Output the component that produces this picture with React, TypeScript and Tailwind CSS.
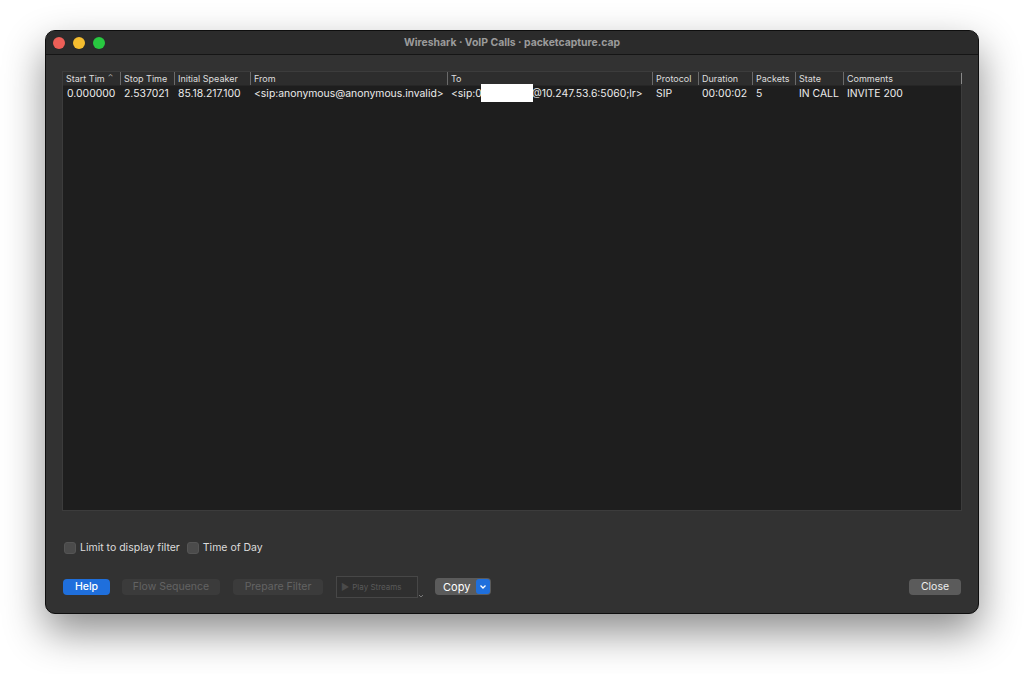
import React from "react";

const cols = [
  { name: "Start Tim", w: 57, val: "0.000000", sort: true },
  { name: "Stop Time", w: 54, val: "2.537021" },
  { name: "Initial Speaker", w: 76, val: "85.18.217.100" },
  { name: "From", w: 197, val: "<sip:anonymous@anonymous.invalid>" },
  { name: "To", w: 205, val: "TO" },
  { name: "Protocol", w: 46, val: "SIP" },
  { name: "Duration", w: 54, val: "00:00:02" },
  { name: "Packets", w: 43, val: "5" },
  { name: "State", w: 48, val: "IN CALL" },
  { name: "Comments", w: 118, val: "INVITE 200" },
];

export default function App() {
  return (
    <div
      className="w-[1024px] h-[674px] bg-white pt-[30px] pl-[45px] overflow-hidden"
      style={{ fontFamily: "Inter, 'Noto Sans', sans-serif" }}
    >
      <div className="w-[934px] h-[584px] rounded-[10px] bg-[#323232] border border-[#0e0e0e] shadow-[0_18px_40px_rgba(0,0,0,0.45)] flex flex-col overflow-hidden">
        {/* title bar */}
        <div className="h-[24px] shrink-0 bg-[#2b2b2b] border-b border-[#151515] flex items-center relative">
          <div className="flex items-center gap-[8px] pl-[7px]">
            <span className="w-[12px] h-[12px] rounded-full bg-[#ed5f57]" />
            <span className="w-[12px] h-[12px] rounded-full bg-[#f5bd2f]" />
            <span className="w-[12px] h-[12px] rounded-full bg-[#28c840]" />
          </div>
          <div className="absolute inset-0 flex items-center justify-center text-[10.4px] font-bold text-[#9b9b9b]">
            Wireshark · VoIP Calls · packetcapture.cap
          </div>
        </div>

        {/* table */}
        <div className="mt-[16px] mx-[16px] h-[440px] border border-[#3c3c3c] bg-[#1e1e1e] flex flex-col">
          <div className="h-[14px] bg-[#2d2d2d] flex items-center text-[9px] text-[#dedede] border-b border-[#262626]">
            {cols.map((c, i) => (
              <div
                key={c.name}
                className={`h-full flex items-center pl-[3px] shrink-0 ${i > 0 ? "border-l border-[#6a6a6a]" : ""}`}
                style={{ width: c.w }}
              >
                <span className="whitespace-nowrap">{c.name}</span>
                {c.sort && <span className="ml-[3px] text-[7px] text-[#bbbbbb]">⌃</span>}
              </div>
            ))}
            <div className="h-[11px] border-l border-[#8a8a8a]" />
          </div>
          <div className="h-[15px] flex items-center text-[10.4px] text-[#ececec] relative">
            {cols.map((c) => (
              <div key={c.name} className="shrink-0 pl-[4px] whitespace-nowrap" style={{ width: c.w }}>
                {c.val === "TO" ? (
                  <span className="relative">
                    {"<sip:0"}
                    <span className="inline-block w-[50px]" />
                    {"@10.247.53.6:5060;lr>"}
                    <span className="absolute left-[30px] top-[-3px] w-[52px] h-[18px] bg-white" />
                  </span>
                ) : (
                  c.val
                )}
              </div>
            ))}
          </div>
        </div>

        {/* checkboxes */}
        <div className="mt-[29px] ml-[18px] flex items-center text-[10.5px] text-[#dcdcdc]">
          <span className="w-[12px] h-[12px] rounded-[3px] bg-[#4b4b4b] border border-[#555]" />
          <span className="ml-[4px]">Limit to display filter</span>
          <span className="ml-[7px] w-[12px] h-[12px] rounded-[3px] bg-[#4b4b4b] border border-[#555]" />
          <span className="ml-[4px]">Time of Day</span>
        </div>

        {/* buttons */}
        <div className="mt-[20px] ml-[17px] mr-[17px] flex items-center text-[10.5px]">
          <div className="w-[47px] h-[16px] rounded-[4px] bg-[#1f6fdc] text-white font-medium flex items-center justify-center">
            Help
          </div>
          <div className="ml-[12px] w-[98px] h-[16px] rounded-[4px] bg-[#3b3b3b] text-[#636363] flex items-center justify-center">
            Flow Sequence
          </div>
          <div className="ml-[13px] w-[90px] h-[16px] rounded-[4px] bg-[#3b3b3b] text-[#636363] flex items-center justify-center">
            Prepare Filter
          </div>
          <div className="ml-[13px] w-[82px] h-[22px] border border-[#474747] bg-[#2f2f2f] flex items-center text-[8px] text-[#5a5a5a]">
            <span className="ml-[4px] text-[9px] text-[#4a4a4a]">▶</span>
            <span className="ml-[3px]">Play Streams</span>
          </div>
          <svg width="6" height="6" viewBox="0 0 6 6" className="self-end mb-[-1px]">
            <path d="M1 2 L3 4 L5 2" stroke="#777" strokeWidth="1" fill="none" />
          </svg>
          <div className="ml-[11px] w-[56px] h-[17px] rounded-[4px] bg-[#5b5b5b] flex items-center text-white">
            <span className="ml-[8px] text-[11px]">Copy</span>
            <div className="ml-auto mr-[1px] w-[14px] h-[15px] rounded-[3px] bg-[#1f6fdc] flex items-center justify-center">
              <svg width="8" height="6" viewBox="0 0 8 6">
                <path d="M1.5 1.5 L4 4 L6.5 1.5" stroke="white" strokeWidth="1.3" fill="none" />
              </svg>
            </div>
          </div>
          <div className="ml-auto w-[52px] h-[16px] rounded-[4px] bg-[#5b5b5b] text-[#eeeeee] flex items-center justify-center">
            Close
          </div>
        </div>
      </div>
    </div>
  );
}
